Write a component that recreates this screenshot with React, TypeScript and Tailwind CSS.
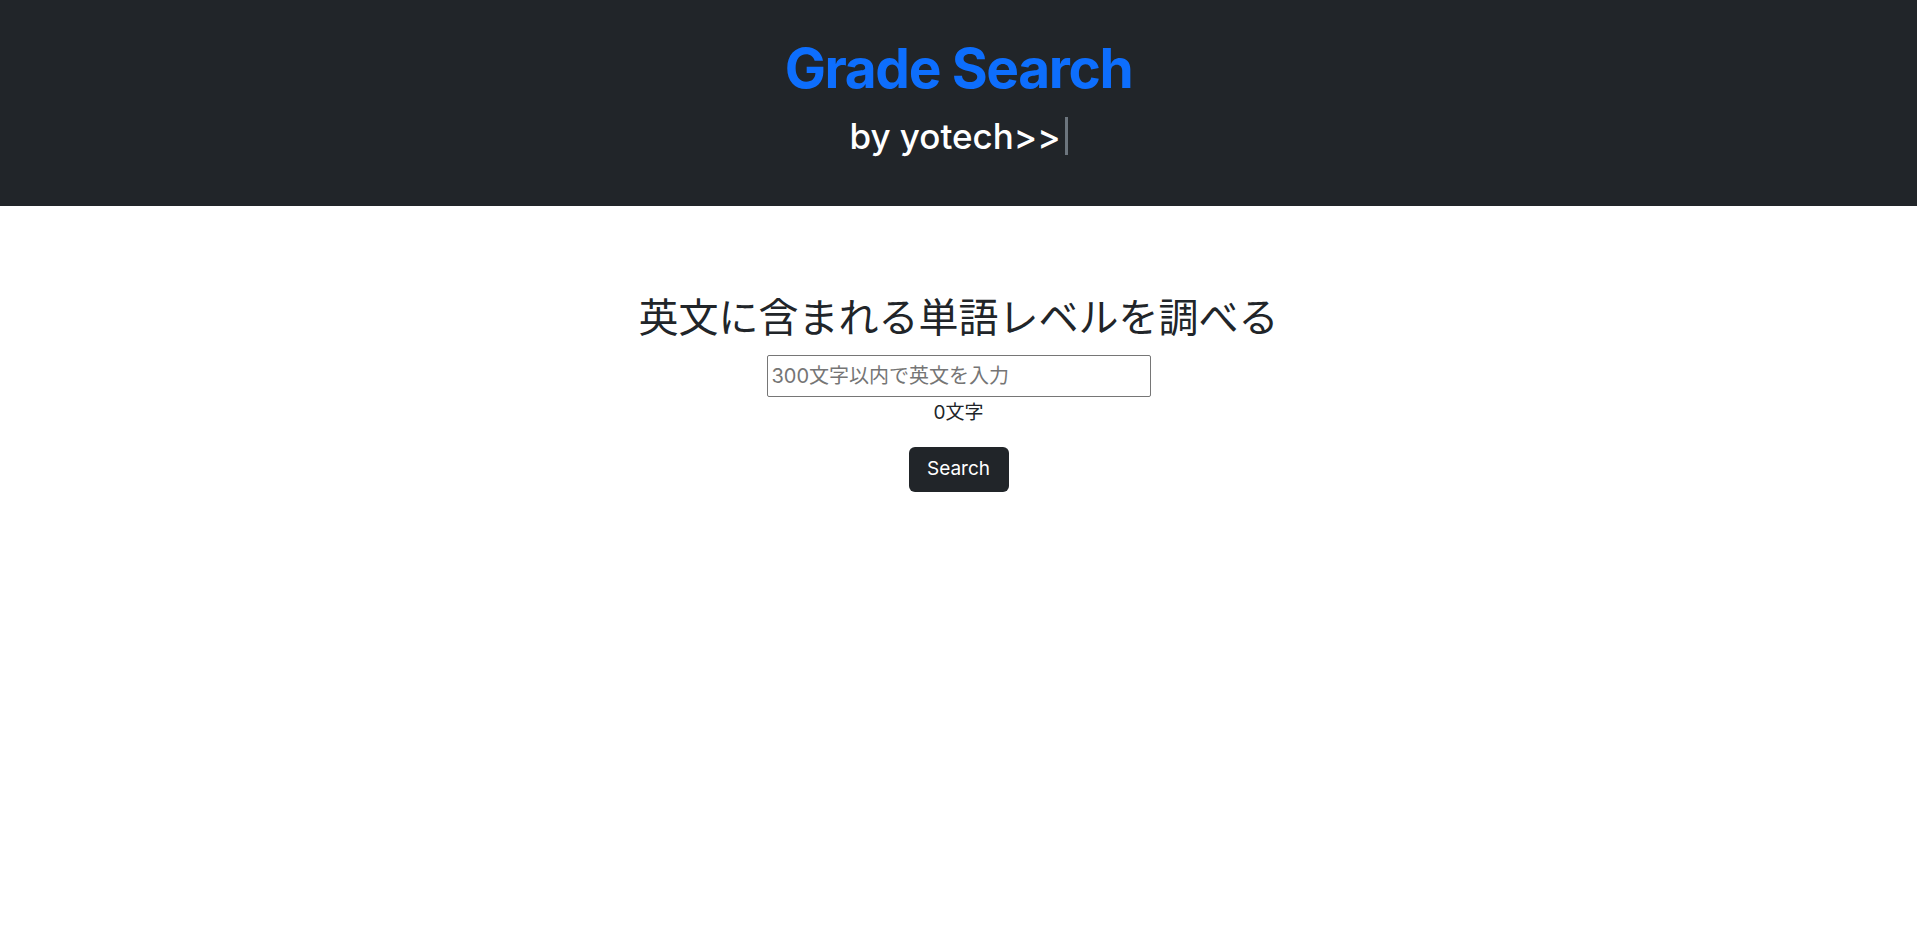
import { useState } from 'react';

export default function App() {
  const [text, setText] = useState('');

  return (
    <div className="min-h-screen bg-white" style={{ fontFamily: 'Inter, "Noto Sans CJK JP", sans-serif' }}>
      <header className="bg-[#212529] h-[206px] flex flex-col items-center pt-[36px]">
        <h1 className="text-[55px] leading-[64px] font-bold text-[#0d6efd] tracking-tight">
          Grade Search
        </h1>
        <p className="mt-[16px] flex items-center text-[35px] leading-[40px] text-white font-medium">
          by yotech&gt;&gt;
          <span className="ml-[4px] inline-block w-[3px] h-[38px] bg-[#6c757d]" />
        </p>
      </header>

      <main className="flex flex-col items-center pt-[86px]">
        <h2 className="text-[40px] leading-[52px] text-[#212529] font-normal">
          英文に含まれる単語レベルを調べる
        </h2>
        <input
          value={text}
          onChange={(e) => setText(e.target.value.slice(0, 300))}
          placeholder="300文字以内で英文を入力"
          className="mt-[11px] w-[384px] h-[42px] border border-[#767676] rounded-[2px] px-[4px] text-[20px] text-[#212529] placeholder:text-[#757575] outline-none"
        />
        <div className="mt-[3px] text-[19px] leading-[26px] text-[#212529]">{text.length}文字</div>
        <button className="mt-[21px] w-[100px] h-[45px] bg-[#212529] text-white text-[19px] rounded-[6px]">
          Search
        </button>
      </main>
    </div>
  );
}
